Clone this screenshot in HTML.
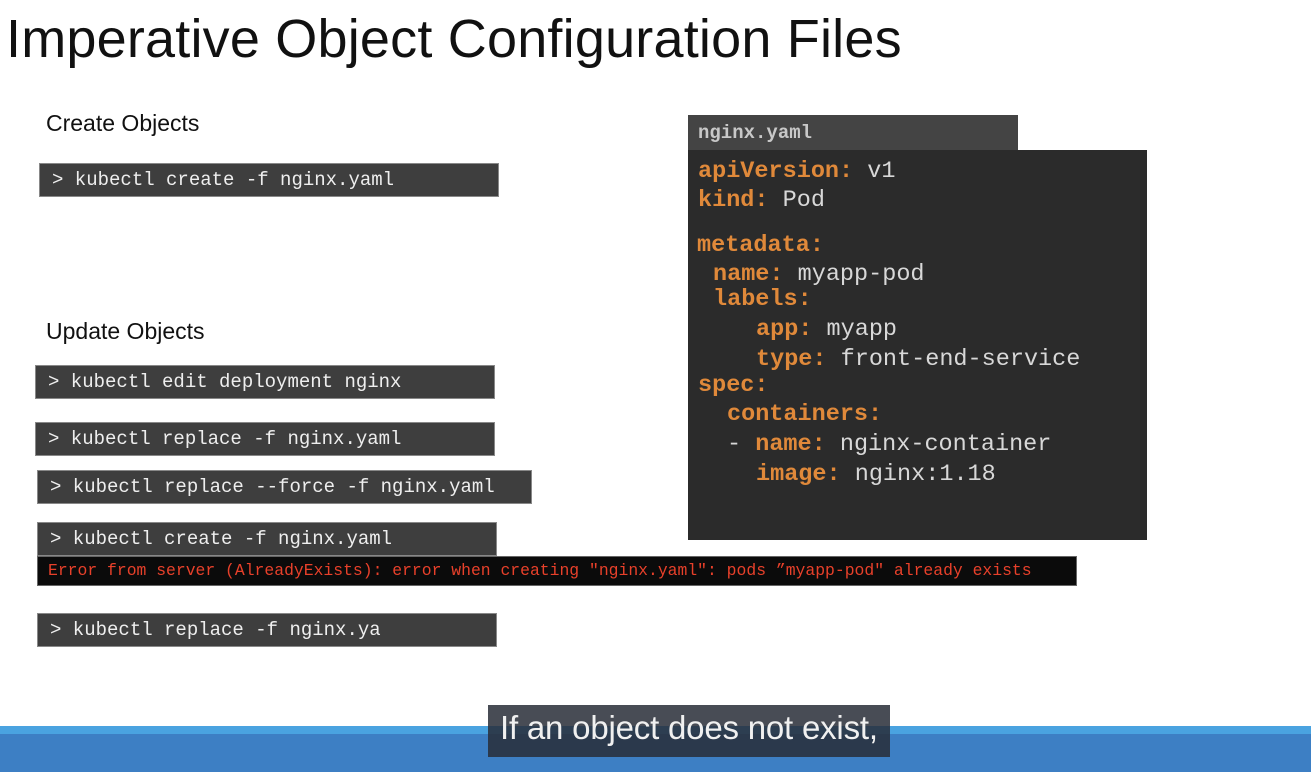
<!DOCTYPE html>
<html><head><meta charset="utf-8"><style>
body{margin:0;width:1311px;height:772px;background:#fff;position:relative;overflow:hidden;font-family:"Liberation Sans",sans-serif}
.a{position:absolute}
h1{position:absolute;left:6px;top:8px;margin:0;font-weight:normal;font-size:54px;color:#111;white-space:nowrap;letter-spacing:0.2px}
.h{position:absolute;font-size:23px;color:#111}
.c{position:absolute;background:#3e3e3e;border:1px solid #888;box-sizing:border-box;color:#eee;font-family:"Liberation Mono",monospace;font-size:19px;line-height:32px;padding-left:12px;white-space:pre}
.e{position:absolute;left:37px;top:556px;width:1040px;height:30px;background:#0b0b0b;border:1px solid #666;box-sizing:border-box;color:#e8402a;font-family:"Liberation Mono",monospace;font-size:16.4px;line-height:28px;padding-left:10px;white-space:pre;overflow:hidden}
.y{position:absolute;font-family:"Liberation Mono",monospace;font-size:23.5px;color:#d8d8d8;white-space:pre}
.y b{color:#e0893a}
</style></head><body>
<h1>Imperative Object Configuration Files</h1>
<div class="h" style="left:46px;top:110px">Create Objects</div>
<div class="h" style="left:46px;top:318px">Update Objects</div>
<div class="c" style="left:39px;top:163px;width:460px;height:34px">&gt; kubectl create -f nginx.yaml</div>
<div class="c" style="left:35px;top:365px;width:460px;height:34px">&gt; kubectl edit deployment nginx</div>
<div class="c" style="left:35px;top:422px;width:460px;height:34px">&gt; kubectl replace -f nginx.yaml</div>
<div class="c" style="left:37px;top:470px;width:495px;height:34px">&gt; kubectl replace --force -f nginx.yaml</div>
<div class="c" style="left:37px;top:522px;width:460px;height:34px">&gt; kubectl create -f nginx.yaml</div>
<div class="e">Error from server (AlreadyExists): error when creating "nginx.yaml": pods ”myapp-pod" already exists</div>
<div class="c" style="left:37px;top:613px;width:460px;height:34px">&gt; kubectl replace -f nginx.ya</div>

<div class="a" style="left:688px;top:115px;width:330px;height:36px;background:#444"></div>
<div class="a" style="left:698px;top:122px;font-family:'Liberation Mono',monospace;font-weight:bold;font-size:19px;color:#c8c8c8">nginx.yaml</div>
<div class="a" style="left:688px;top:150px;width:459px;height:390px;background:#2b2b2b"></div>
<div class="y" style="left:698px;top:158px"><b>apiVersion:</b> v1</div>
<div class="y" style="left:698px;top:187px"><b>kind:</b> Pod</div>
<div class="y" style="left:697px;top:232px"><b>metadata:</b></div>
<div class="y" style="left:713px;top:261px"><b>name:</b> myapp-pod</div>
<div class="y" style="left:713px;top:286px"><b>labels:</b></div>
<div class="y" style="left:756px;top:316px"><b>app:</b> myapp</div>
<div class="y" style="left:756px;top:346px"><b>type:</b> front-end-service</div>
<div class="y" style="left:698px;top:372px"><b>spec:</b></div>
<div class="y" style="left:727px;top:401px"><b>containers:</b></div>
<div class="y" style="left:727px;top:431px">- <b>name:</b> nginx-container</div>
<div class="y" style="left:756px;top:461px"><b>image:</b> nginx:1.18</div>

<div class="a" style="left:0;top:726px;width:1311px;height:8px;background:#4aa3e0"></div>
<div class="a" style="left:0;top:734px;width:1311px;height:38px;background:#3d7fc4"></div>
<div class="a" style="left:488px;top:705px;width:402px;height:52px;background:rgba(40,45,55,0.85)"></div>
<div class="a" style="left:500px;top:709px;font-size:33px;color:#f0f0f0;letter-spacing:-0.2px">If an object does not exist,</div>
</body></html>
